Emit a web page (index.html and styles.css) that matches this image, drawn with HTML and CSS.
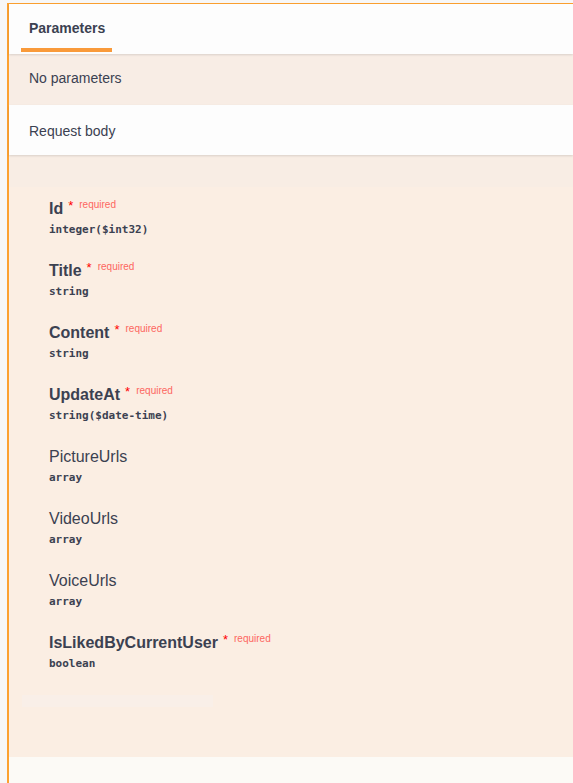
FILE: index.html
```html
<!DOCTYPE html>
<html lang="en">
<head>
<meta charset="utf-8">
<title>Parameters</title>
<link rel="stylesheet" href="styles.css">
</head>
<body>
<div class="opblock">
  <div class="tab-header">
    <div class="tab active">Parameters</div>
  </div>
  <div class="section-body">No parameters</div>
  <div class="section-header">Request body</div>
  <div class="body-top"></div>
  <div class="schema">
    <div class="prop">
      <div class="prop-name req">Id<span class="star">*</span><span class="req-label">required</span></div>
      <div class="prop-type">integer($int32)</div>
    </div>
    <div class="prop">
      <div class="prop-name req">Title<span class="star">*</span><span class="req-label">required</span></div>
      <div class="prop-type">string</div>
    </div>
    <div class="prop">
      <div class="prop-name req">Content<span class="star">*</span><span class="req-label">required</span></div>
      <div class="prop-type">string</div>
    </div>
    <div class="prop">
      <div class="prop-name req">UpdateAt<span class="star">*</span><span class="req-label">required</span></div>
      <div class="prop-type">string($date-time)</div>
    </div>
    <div class="prop">
      <div class="prop-name">PictureUrls</div>
      <div class="prop-type">array</div>
    </div>
    <div class="prop">
      <div class="prop-name">VideoUrls</div>
      <div class="prop-type">array</div>
    </div>
    <div class="prop">
      <div class="prop-name">VoiceUrls</div>
      <div class="prop-type">array</div>
    </div>
    <div class="prop">
      <div class="prop-name req">IsLikedByCurrentUser<span class="star">*</span><span class="req-label">required</span></div>
      <div class="prop-type">boolean</div>
    </div>
    <div class="ghost-bar"></div>
  </div>
  <div class="footer"></div>
</div>
</body>
</html>
```

FILE: styles.css
```css
html, body {
  margin: 0;
  padding: 0;
}

body {
  background: #f7f7f7;
  font-family: "Liberation Sans", Arial, sans-serif;
  color: #3b4151;
  overflow: hidden;
}

.opblock {
  margin: 3px 0 0 7px;
  border-top: 1px solid #fca130;
  border-left: 2px solid #fca130;
  background: #fbeee3;
}

.tab-header {
  height: 50px;
  background: #fdfdfd;
  box-shadow: 0 1px 2px rgba(0, 0, 0, 0.12);
  position: relative;
  z-index: 1;
  padding-left: 12px;
  display: flex;
}

.tab {
  width: 91px;
  box-sizing: border-box;
  padding: 0 8px;
  font-size: 14px;
  font-weight: 700;
  display: flex;
  align-items: center;
  height: 48px;
  position: relative;
}

.tab.active::after {
  content: "";
  position: absolute;
  left: 0;
  right: 0;
  top: 44px;
  height: 4px;
  background: #f99a3a;
}

.section-body {
  height: 51px;
  background: #f8ede5;
  box-sizing: border-box;
  padding: 0 20px 3px;
  display: flex;
  align-items: center;
  font-size: 14px;
}

.section-header {
  height: 50px;
  background: #fdfdfd;
  box-shadow: 0 1px 2px rgba(0, 0, 0, 0.12);
  position: relative;
  z-index: 1;
  box-sizing: border-box;
  padding: 1px 20px 0;
  display: flex;
  align-items: center;
  font-size: 14px;
}

.body-top {
  height: 32px;
  background: #f8ede4;
}

.schema {
  padding: 12px 0 0 40px;
  height: 570px;
  box-sizing: border-box;
  background: #fbeee3;
}

.prop {
  margin-bottom: 23px;
}

.prop-name {
  font-size: 16px;
  line-height: 20px;
  height: 20px;
  white-space: nowrap;
}

.prop-name.req {
  font-weight: 700;
}

.star {
  color: #f00;
  font-size: 13px;
  font-weight: 400;
  margin-left: 5px;
  position: relative;
  top: -4px;
}

.req-label {
  color: #fd6660;
  font-size: 10px;
  font-weight: 400;
  margin-left: 6px;
  position: relative;
  top: -6px;
}

.prop-type {
  margin-top: 3px;
  font-family: "DejaVu Sans Mono", "Liberation Mono", monospace;
  font-size: 11px;
  font-weight: 700;
  line-height: 16px;
  height: 16px;
  color: #3b4151;
}

.ghost-bar {
  margin: 0 0 0 -27px;
  width: 191px;
  height: 12px;
  background: #f9efe8;
}

.footer {
  height: 26px;
  background: #fcfaf6;
}
```
